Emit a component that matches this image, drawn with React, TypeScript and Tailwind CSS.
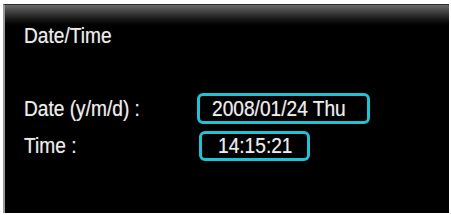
const Field = ({ label, value, boxClass }: { label: string; value: string; boxClass: string }) => {
  return (
    <div className="flex items-center">
      <div className="w-[173px] shrink-0">
        <span className="inline-block origin-left scale-x-[0.87] whitespace-nowrap">{label}</span>
      </div>
      <div className={`flex items-center rounded-[6px] border-[3px] border-[#1ec3d6] ${boxClass}`}>
        <span className="inline-block origin-left scale-x-[0.87] whitespace-nowrap">{value}</span>
      </div>
    </div>
  );
};

export default function App() {
  return (
    <div className="h-[215px] w-[451px] bg-white pb-[2px] pl-[3px] pr-[2px] pt-[4px]">
      <div
        className="relative h-full w-full border-l-2 border-t border-l-[#9a9a9a] border-t-[#2a2a2a] bg-black text-[22px] leading-none text-[#ececec] [text-shadow:0_0_1px_rgba(255,255,255,0.45)]"
        style={{ fontFamily: '"Liberation Sans", Arial, sans-serif' }}
      >
        <div className="absolute inset-x-0 top-0 h-[24px] bg-gradient-to-b from-[#6a6a6a] to-black" />
        <div className="relative flex flex-col pl-[19px] pt-[20px]">
          <div className="h-[68px]">
            <span className="inline-block origin-left scale-x-[0.87]">Date/Time</span>
          </div>
          <div className="flex flex-col gap-[7px]">
            <Field label="Date (y/m/d) :" value="2008/01/24 Thu" boxClass="h-[31px] w-[173px] pl-[12px]" />
            <Field label="Time :" value="14:15:21" boxClass="ml-[2px] h-[30px] w-[111px] pl-[16px]" />
          </div>
        </div>
      </div>
    </div>
  );
}
